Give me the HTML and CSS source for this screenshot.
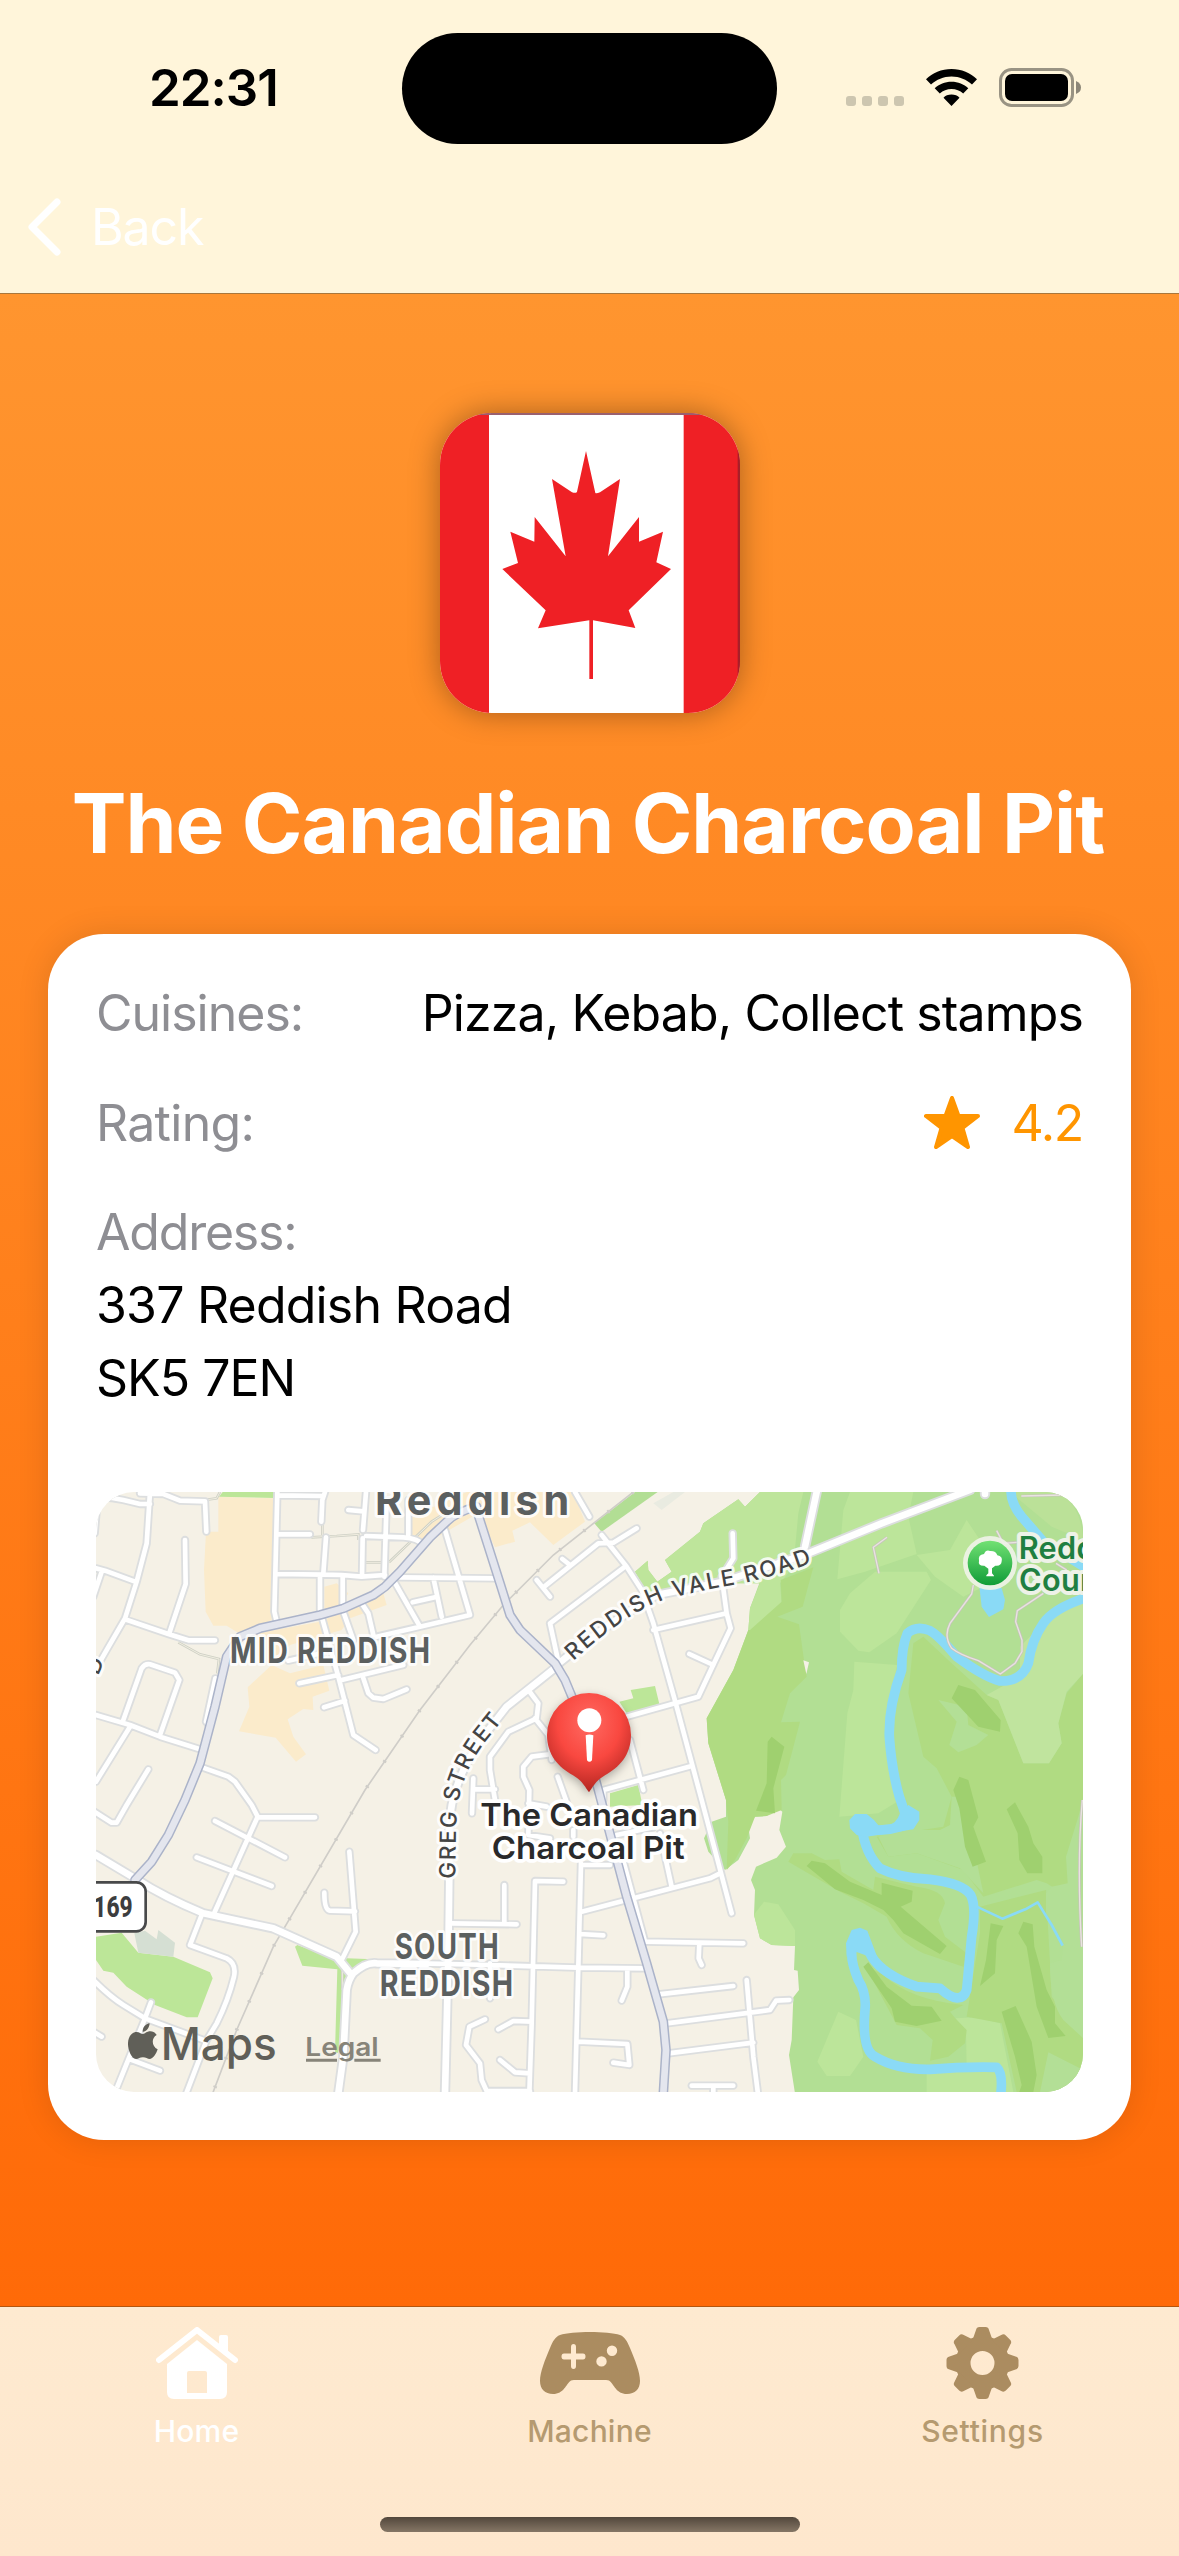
FILE: index.html
```html
<!DOCTYPE html>
<html lang="en">
<head>
<meta charset="utf-8">
<title>The Canadian Charcoal Pit</title>
<link rel="stylesheet" href="styles.css">
</head>
<body>
<div class="screen">
  <header class="top">
    <div class="status">
      <div class="status-left"><span class="clock">22:31</span></div>
      <div class="island"></div>
      <div class="status-right">
        <span class="dots"><i></i><i></i><i></i><i></i></span>
        <svg class="wifi" viewBox="0 0 51 37"><path d="M25.500 0C35.500 0 44.500 4 51 10.200L46 15.500C40.500 10.500 33.500 7.400 25.500 7.400S10.500 10.500 5 15.500L0 10.200C6.500 4 15.500 0 25.500 0ZM25.500 12.800C32 12.800 38 15.300 42.300 19.300L37.200 24.500C34 21.700 30 20 25.500 20S17 21.700 13.800 24.500L8.700 19.300C13 15.300 19 12.800 25.500 12.800ZM25.500 25.500C28.800 25.500 31.700 26.700 33.500 28.700L25.500 37L17.500 28.700C19.300 26.700 22.200 25.500 25.500 25.500Z"/></svg>
        <svg class="battery" viewBox="0 0 83 39"><rect x="1.500" y="1.500" width="72" height="36" rx="11" fill="none" stroke="#000" stroke-opacity=".4" stroke-width="3"/><rect x="6" y="6" width="63" height="27" rx="7"/><path d="M77 13Q82 15 82 19.500T77 26Z" fill-opacity=".45"/></svg>
      </div>
    </div>
    <nav class="nav">
      <svg class="chevron" viewBox="0 0 34 58"><path d="M30 4L5 29L30 54" fill="none" stroke="#fff" stroke-width="7" stroke-linecap="round" stroke-linejoin="round"/></svg>
      <span class="back">Back</span>
    </nav>
  </header>

  <main class="content">
    <svg class="flag" viewBox="0 0 900 900" preserveAspectRatio="none">
      <rect width="900" height="900" fill="#fff"/>
      <rect width="147" height="900" fill="#ef2025"/><rect x="731" width="169" height="900" fill="#ef2025"/>
      <rect x="893" width="7" height="900" fill="#a81e28"/>
      <rect width="900" height="6" fill="#99606f"/>
      <path fill="#ef2025" d="M438 114L466 240Q470 242 480 238L540 198L504 430L597 312L597 386L669 356L649 448L693 468L566 592L586 645L459 622L459 798L448 798L448 622L294 646L317 592L187 468L234 450L211 356L283 386L284 312L377 430L336 198L396 238Q408 242 411 236Z"/>
    </svg>
    <h1 class="title">The Canadian Charcoal Pit</h1>

    <section class="card">
      <div class="row"><span class="label cuisines">Cuisines:</span><span class="value kinds">Pizza, Kebab, Collect stamps</span></div>
      <div class="row"><span class="label rating">Rating:</span>
        <span class="stars"><svg class="star" viewBox="0 0 56 53"><path d="M28 2L34.500 20H54L38.500 32L44 51L28 40L12 51L17.500 32L2 20H21.500Z" fill="#ff9500" stroke="#ff9500" stroke-width="4" stroke-linejoin="round"/></svg><span class="score">4.2</span></span></div>
      <div class="address">
        <span class="label addr">Address:</span>
        <span class="value street">337 Reddish Road</span>
        <span class="value post">SK5 7EN</span>
      </div>

      <svg class="map" viewBox="18 36 2961 1800">
        <defs>
          <linearGradient id="park" x1="0" y1="0" x2="0" y2="1"><stop offset="0" stop-color="#72e173"/><stop offset="1" stop-color="#0f9c38"/></linearGradient>
          <radialGradient id="pin" cx=".5" cy=".3" r=".75"><stop offset="0" stop-color="#ff6a62"/><stop offset=".5" stop-color="#f94840"/><stop offset="1" stop-color="#a8201c"/></radialGradient>
          <path id="vale" d="M1450 543Q1590 415 1700 368Q1800 335 1960 310Q2080 282 2200 235"/>
          <path id="greg" d="M1096 1196L1098 1060C1100 1000 1103 950 1128 888Q1150 830 1190 780L1250 705"/>
          <g id="streets">
            <path d="M18 52Q60 50 100 60L150 72H180M180 36L170 190L140 305L105 415L50 510L10 580M150 40L220 42L270 62L345 64L349 155M18 265L45 272L135 305M35 275L10 350M285 180L287 312L237 462M105 418L235 462L295 481H375M14 160L20 90M562 36L556 280L553 395L560 425M562 46L700 48M705 36L697 60L694 125M562 163H660M775 90L820 94M828 36L819 150M708 172L700 280M562 282L700 284L755 285L815 290L885 285M818 175L816 290M828 168L940 172Q985 175 1000 195M890 60L883 290M955 60V165M690 290V400M758 290V380M930 292L1215 295M910 300L990 440M968 367L1035 352M860 470L990 440L1140 405L1065 150M1030 293L1055 410M815 370L835 400L850 465M698 420L745 590L790 765L857 810M760 395L790 480M595 542L700 518M628 610L745 585M755 600L940 555M820 595L835 640L850 653L880 657L950 628M702 682L765 662M376 595L348 725L356 735M100 720L155 565Q165 550 180 553L255 578L268 600L210 765M18 705L120 735L210 770L330 808M120 740L18 905M175 868L110 975L80 1028H65L10 993M330 860L415 890L435 905L485 975L503 1010L370 1305M503 1012H675"/>
            <g transform="translate(990 0)"><path d="M465 36L508 110M350 300L390 350M370 322L535 190L580 188L650 145M427 237L450 255M545 165L620 260L665 330L700 430L770 680L845 960L935 1300M415 545L390 430L615 260M700 450L920 400M938 160L940 235L905 290L920 400L932 445L875 565L835 650L620 710M808 522L880 555M325 630L355 670L350 715L265 755L210 830V870L225 960M345 715L385 765L395 840M160 895L156 1000M160 928H225M395 822L335 830L310 860V890L328 930L325 1065L390 1075M325 970L380 980M413 890L445 980M630 780L670 930M550 930L815 858M550 930V960M640 780"/></g>
            <g transform="translate(0 930)"><path d="M375 93L585 202M320 202L545 288M335 375L300 465L410 505Q440 520 432 560Q415 630 380 700L350 750L285 920M10 570Q60 620 100 645L165 685L340 750M183 637L165 685L78 900M120 808L210 842M10 725L35 740M778 185L797 425L755 510M703 308Q703 360 720 362L795 364"/></g>
            <g transform="translate(990 930)"><path d="M460 120V140M485 365L620 330L870 265L900 250M600 175L675 455L970 460M838 460L836 505L845 525M720 130L755 290M590 135L700 112M430 275L345 273L335 700L328 910M253 285V400M95 400L290 403M483 220L475 530L465 910M483 225H570M480 432L550 436M0 520L210 525L475 533L680 535M622 540V590L605 632M715 613L940 588M740 700L1050 660L1068 632L1108 630M745 790L1000 758M980 570L1000 800L1015 920M815 887H940M880 890V920M335 695L280 693L235 718M330 850L285 847L240 810M195 688L148 710L138 765L180 820L185 870L200 903H330M475 755L622 762L628 825L580 818M210 520V625"/></g>
          </g>
          <g id="wide">
            <path d="M18 1125L140 1198Q220 1250 340 1300L550 1345L740 1430L785 1485M745 1840L760 1730L770 1530Q775 1500 790 1480Q830 1445 860 1450L1010 1452M1400 555Q1550 430 1700 345L1900 305L2155 220L2375 130L2640 30M2180 36L2145 200M2685 30V42M1400 560L1250 680L1195 750Q1078 900 1078 1050V1180L1075 1430L1065 1840"/>
          </g>
          <g id="main">
            <path d="M1160 80Q1100 95 1070 125L1020 172L930 275L885 320L850 345L760 385L690 405L510 445L450 470L410 530L375 680L330 850L285 960L235 1065L185 1145L135 1200M1160 90L1230 310L1260 405L1290 450L1395 550L1425 600L1450 660L1525 930L1610 1250L1670 1450L1720 1625L1728 1710L1720 1840"/>
          </g>
        </defs>
        <rect x="18" y="36" width="2961" height="1800" fill="#f5f1e6"/>

        <g fill="#fbebcb">
          <path d="M385 50L553 55L545 420L455 465L410 437H370L347 395L342 270L348 155H385ZM500 460L690 425L880 340L890 375L780 415L755 450L600 495L545 555L500 525ZM703 320L740 310L775 340L752 380L703 400ZM545 555L600 580L700 555L718 632L668 650L670 690L640 687L593 718L610 770L648 823L618 845L557 773L447 754L478 680L473 622ZM965 110L1130 36H1450L1485 125L1390 195L1320 127L1267 152L1275 185L1215 202L1165 100L990 200L965 165Z"/>
        </g>
        <path fill="#bce698" d="M398 36H552V54L387 50Z"/>
        <path fill="#b2de94" d="M1703 36L1535 155L1513 130L1635 36Z"/>
        <path fill="#e9ebe1" d="M1690 70L1750 36H1785L1715 90Z"/>
        <path fill="#bce698" d="M1588 665L1630 655L1622 630L1695 618L1708 672L1610 700ZM1560 980V940L1645 915L1657 975ZM18 1370L95 1358L145 1418L250 1430L360 1477L368 1495L323 1612H290L195 1575L110 1520L70 1478L40 1472L18 1440ZM622 1395L745 1440L770 1435L850 1438L790 1490L765 1530L745 1720L735 1715L742 1468L637 1457L615 1400Z"/>
        <path fill="#d5dfd3" d="M133 1360L165 1352L200 1378L205 1350L255 1388L250 1430L145 1418Z"/>

        <!-- country park -->
        <path fill="#b2df94" d="M2010 36L1965 80L1945 58L1840 130L1830 155L1725 240L1745 275L1702 305L1675 270L1673 242L1635 275L1680 350L1890 310L2008 310L1980 385L1975 450L1930 570L1850 715L1855 790L1908 960V1010L1865 1025L1842 1075L1855 1115L1905 1170L1945 1140L1980 1075L1975 1040L1995 1010L2030 1008L2063 983L2077 995L2068 1050L2088 1100L2060 1133L1998 1160L1983 1200L1995 1230L1992 1305L2010 1375L2045 1395L2115 1398L2112 1470L2123 1472L2127 1530L2110 1552L2105 1680L2097 1725L2115 1840H2980V36Z"/>
        <path fill="#bee59b" d="M2010 36L1965 80L1945 58L1840 130L1830 155L1725 240L1745 275L1702 305L1675 270L1673 242L1635 275L1680 350L1890 310L2010 310L1980 385L1975 450L1990 455L2075 370L2070 310L2110 260L2125 100L2140 36Z"/>
        <g transform="translate(1980 0)">
          <path fill="#b0db82" d="M0 450L95 365L92 300L190 262L158 380L82 410L147 433L162 540L170 590L120 640L93 727L150 725L108 885L93 900L95 990L50 1008L15 1010L-10 1075L-45 1140L-70 1170L-65 1025L-72 960L-125 790L-130 715L-50 570L-5 450Z"/>
          <path fill="#f5f1e6" d="M160 541L177 547L169 582Z"/>
          <path fill="#bce59a" d="M280 90L300 36H490L475 110L500 222L345 275L262 298ZM650 120L690 180L700 320L640 350L555 290L500 225L600 210ZM300 340L375 275H530L543 300L440 460L358 517L325 512L270 455V390ZM313 545L442 555L415 700L420 870L450 960L385 1000L268 1010L292 700L310 630Z"/>
          <path fill="#b0db82" d="M520 470L600 545L710 645L745 660L820 850H897L935 790L925 730L950 640L1000 580V1280L890 1210L860 1200L700 1250L640 1170L500 1120L415 1130L380 1070L580 1040L605 950L560 865L520 830L475 640L490 490Z"/>
          <path fill="#c0e49e" d="M810 500L880 430L1000 360V580L950 635L925 730L935 790L897 850H820L745 660L710 645L810 590Z"/>
          <path fill="#bbe198" d="M780 36H900Q990 50 1000 180L905 140Z"/>
          <path fill="#b3df96" d="M565 660L650 680L655 735L715 765L680 795L625 817L598 795L620 725ZM385 1070L450 1050H570L600 1035L605 950H640L700 1240L630 1165L500 1120L415 1130Z"/>
          <path fill="#9fd06f" d="M625 615L675 630L752 720L750 755L685 740L605 655ZM65 770L103 800L70 925L75 1000L18 992L50 910L53 785ZM628 890L655 900L685 1012L670 1040L708 1145L668 1160L645 1100L628 985L610 930ZM795 967L835 1040L850 1090L877 1130V1180H832L808 1140L803 1060L770 988Z"/>
        </g>
        <g transform="translate(1980 930)">
          <path fill="#bce59a" d="M15 370L42 335L85 343L135 420V468L65 465L30 445L12 375ZM265 665L318 690L340 800L300 858H230L202 815ZM617 685L680 682L750 700L790 906H530V850L650 830L648 720Z"/>
          <path fill="#b0db82" d="M115 215L130 190H185L225 210L268 208L275 245L370 300L375 260L500 290Q580 300 585 340L565 390L585 440L650 490L640 530L520 490Q440 450 410 380L340 340L270 305ZM690 350L888 300L900 520L905 620L1000 745V906H800L755 700L650 680L690 430ZM345 525L400 555Q480 630 640 645L600 665L620 690L650 720L645 760L595 800L540 812L548 750L510 715L440 705Z"/>
          <path fill="#9fd06f" d="M170 228L185 212L225 220L300 275L395 315V278L488 302L485 335L452 350L590 468L570 492L460 430L430 390L400 360L340 330L255 298ZM340 530L355 517L410 590L485 647L545 650L575 692L500 708L435 695L425 655ZM722 400L760 408L740 450L735 550L690 588L708 510ZM820 395L848 403L853 470L890 600L915 650V700L947 738L895 744L860 650L830 470L805 430ZM755 665L797 648L845 755L860 855L850 906H808L815 885L795 800Z"/>
          <path fill="#b3df96" d="M1000 20V745L940 690Q900 640 900 520L935 510L940 455L888 380V310L905 290L953 280L948 200L985 80ZM895 787L1000 840V906H870Z"/>
        </g>

        <!-- footpaths -->
        <path d="M345 60L380 55L390 36M265 487L330 523L387 537L382 580M664 172L740 168L805 163V180M697 130V165M828 247H875M897 247L1025 125L1080 90M757 1470V1530" fill="none" stroke="#cfd1c6" stroke-width="8"/>
        <path d="M345 60L380 55L390 36M265 487L330 523L387 537L382 580M664 172L740 168L805 163V180M697 130V165M828 247H875M897 247L1025 125L1080 90M757 1470V1530" fill="none" stroke="#f0ede0" stroke-width="3"/>

        <!-- railway -->
        <path d="M1630 36L1390 225L1240 375L1140 495L990 690L825 930L550 1400L440 1650L368 1840" fill="none" stroke="#cfcdc8" stroke-width="5"/>
        <path d="M1630 36L1390 225L1240 375L1140 495L990 690L825 930L550 1400L440 1650L368 1840" fill="none" stroke="#cfcdc8" stroke-width="11" stroke-dasharray="6 86"/>

        <!-- river -->
        <g fill="none" stroke="#8adaf6" stroke-width="29" stroke-linejoin="round">
          <path d="M2763 30Q2762 70 2795 110L2860 185L2990 265M2990 352Q2890 385 2860 430Q2825 480 2815 550Q2795 605 2730 603Q2680 590 2600 530Q2545 465 2520 452Q2480 435 2452 460Q2435 500 2435 570Q2395 680 2398 770Q2405 870 2428 950L2445 1000Q2480 1015 2455 1032Q2400 1055 2320 1050"/>
          <g transform="translate(1980 930)"><path d="M335 110Q345 190 390 235Q450 265 540 268Q640 280 662 315Q680 350 665 440L650 600Q632 650 570 595L500 590Q400 555 365 500Q330 430 310 460Q295 500 325 570Q350 610 345 660Q335 780 375 800Q440 840 540 838Q640 830 740 832Q760 850 752 915"/>
          <path d="M680 350L757 386L830 356L863 337L905 405L938 467" stroke-width="8"/></g>
        </g>
        <g fill="#8adaf6"><path d="M2278 1020L2295 1002H2330L2352 1020L2370 1042L2390 1040Q2420 1030 2430 1000L2455 975L2488 995V1020L2470 1048L2330 1070L2300 1065L2280 1045Z"/><path d="M2268 1390L2285 1350L2310 1343L2332 1352L2365 1440L2290 1412L2270 1430Z"/><path d="M2667 310L2735 325L2745 360L2740 388L2697 411L2675 380Z"/></g>

        <!-- park trails -->
        <path d="M2391 172L2350 202L2367 280M2720 152L2740 190L2780 187M2650 315L2645 342L2580 430Q2560 470 2585 505Q2610 525 2665 542L2731 582L2775 550L2796 515V480L2777 425L2782 392L2860 340M2794 48L2920 45M2898 250L2930 270M2977 960Q2960 1150 2975 1400" fill="none" stroke="#c7c2bd" stroke-width="8"/>
        <path d="M2391 172L2350 202L2367 280M2720 152L2740 190L2780 187M2650 315L2645 342L2580 430Q2560 470 2585 505Q2610 525 2665 542L2731 582L2775 550L2796 515V480L2777 425L2782 392L2860 340M2794 48L2920 45M2898 250L2930 270M2977 960Q2960 1150 2975 1400" fill="none" stroke="#e9e4e0" stroke-width="4"/>

        <g class="roads">
          <use href="#streets" stroke="#dcdedf" stroke-width="25"/>
          <use href="#wide" stroke="#dcdedf" stroke-width="31"/>
          <use href="#streets" stroke="#fff" stroke-width="14"/>
          <use href="#wide" stroke="#fff" stroke-width="20"/>
          <use href="#main" stroke="#abb3c9" stroke-width="29"/>
          <use href="#main" stroke="#e4e6ee" stroke-width="20"/>
        </g>

        <g class="halo">
          <text class="town" x="855" y="105" textLength="583">Reddish</text>
          <g class="district">
            <text x="420" y="548" textLength="604" lengthAdjust="spacingAndGlyphs">MID REDDISH</text>
            <text x="914" y="1437" textLength="316" lengthAdjust="spacingAndGlyphs">SOUTH</text>
            <text x="869" y="1549" textLength="404" lengthAdjust="spacingAndGlyphs">REDDISH</text>
          </g>
          <g class="road-name">
            <text><textPath href="#vale" textLength="788">REDDISH VALE ROAD</textPath></text>
            <text><textPath href="#greg" textLength="512">GREG STREET</textPath></text>
            <text transform="translate(24 588) rotate(-66)">D</text>
          </g>
        </g>

        <circle cx="2700" cy="249" r="81" fill="#f0f3e9" fill-opacity=".9"/>
        <circle cx="2700" cy="249" r="67" fill="url(#park)"/>
        <path fill="#fff" d="M2689 286L2695 280V266L2683 257Q2663 258 2667 243Q2663 224 2682 222Q2688 208 2700 213Q2718 212 2722 226Q2739 229 2735 244Q2734 259 2716 257L2706 265V280L2712 287V289H2689Z"/>
        <g class="park-name"><text x="2786" y="237">Redd</text><text x="2787" y="333">Coun</text></g>

        <rect x="-60" y="1207" width="227" height="147" rx="28" fill="#fff" stroke="#48494a" stroke-width="8"/>
        <text class="shield" x="10" y="1311" textLength="118" lengthAdjust="spacingAndGlyphs">169</text>

        <path class="pin" fill="url(#pin)" d="M1497 639A126 126 0 0 1 1623 765C1623 825 1588 862 1545 886C1515 903 1507 925 1497 937C1487 925 1479 903 1449 886C1406 862 1371 825 1371 765A126 126 0 0 1 1497 639Z"/>
        <circle cx="1498" cy="721" r="36" fill="#fff"/>
        <path fill="#fff" d="M1487 766Q1498 761 1510 766L1506 841Q1498 850 1491 841Z"/>
        <g class="place"><text x="1171" y="1038" textLength="653" lengthAdjust="spacingAndGlyphs">The Canadian</text><text x="1205" y="1137" textLength="579" lengthAdjust="spacingAndGlyphs">Charcoal Pit</text></g>

        <g class="brand">
          <path d="M179 1630C178 1645 168 1656 158 1655C158 1641 167 1632 179 1630ZM158 1662C165 1662 170 1654 181 1654C190 1654 196 1659 200 1665C183 1675 185 1700 203 1708C199 1720 190 1736 180 1737C172 1737 168 1732 159 1732C149 1732 146 1737 138 1737C124 1737 113 1708 114 1689C115 1667 128 1656 140 1656C148 1656 153 1662 158 1662Z"/>
          <text class="maps" x="212" y="1739" textLength="348" lengthAdjust="spacingAndGlyphs">Maps</text>
        </g>
        <g class="legal"><text x="646" y="1727" textLength="220" lengthAdjust="spacingAndGlyphs">Legal</text><path d="M648 1736H741V1745H648ZM793 1736H872V1745H793Z"/></g>
      </svg>
    </section>
  </main>

  <footer class="tabs">
    <div class="tab active">
      <svg class="ic-home" viewBox="0 0 82 72"><path fill="none" stroke="#fff" stroke-width="6" stroke-linecap="round" stroke-linejoin="round" d="M3 33L41 3L79 33"/><path fill="#fff" d="M63 10Q63 8 65 8H70Q72 8 72 10V29L63 22Z"/><path fill="#fff" fill-rule="evenodd" d="M41 13L71 37V65Q71 72 64 72H18Q11 72 11 65V37ZM33 44Q31 44 31 46V66H51V46Q51 44 49 44Z"/></svg>
      <span class="t-home">Home</span>
    </div>
    <div class="tab">
      <svg class="ic-pad" viewBox="0 0 100 62"><path fill="#ab8c60" fill-rule="evenodd" d="M50 0C62 0 74 1 80 3C85 5 87 9 90 16C95 28 100 40 100 49C100 57 95 62 87 62C76 62 74 52 69 48.500Q68 48 66 48H34Q32 48 31 48.500C26 52 24 62 13 62C5 62 0 57 0 49C0 40 5 28 10 16C13 9 15 5 20 3C26 1 38 0 50 0ZM33.500 12Q31 12 31 15V21.500H24Q21.500 21.500 21.500 24.500T24 27.500H31V34Q31 37 33.500 37T36 34V27.500H43Q45.500 27.500 45.500 24.500T43 21.500H36V15Q36 12 33.500 12ZM72 13.500A5.200 5.200 0 1 0 72 23.900A5.200 5.200 0 1 0 72 13.500ZM61.500 24.200A5.200 5.200 0 1 0 61.500 34.600A5.200 5.200 0 1 0 61.500 24.200Z"/></svg>
      <span class="t-machine">Machine</span>
    </div>
    <div class="tab">
      <svg class="ic-gear" viewBox="-36.500 -36 73 72"><g fill="#ab8c60"><path fill-rule="evenodd" d="M0-27A27 27 0 1 0 0 27A27 27 0 1 0 0-27ZM0-12A12 12 0 1 1 0 12A12 12 0 1 1 0-12Z"/><g id="teeth"><path id="tooth" d="M-10-23L-6.500-33Q-6-36 -3-36H3Q6-36 6.500-33L10-23Z"/><use href="#tooth" transform="rotate(45)"/><use href="#tooth" transform="rotate(90)"/><use href="#tooth" transform="rotate(135)"/></g><use href="#teeth" transform="rotate(180)"/></g></svg>
      <span class="t-settings">Settings</span>
    </div>
    <div class="home-indicator"></div>
  </footer>
</div>
</body>
</html>
```

FILE: styles.css
```css
* { box-sizing: border-box; }
body {
  margin: 0;
  font-family: Inter, "Liberation Sans", sans-serif;
}
.screen {
  width: 1179px;
  height: 2556px;
  display: flex;
  flex-direction: column;
  overflow: hidden;
  background: linear-gradient(#ff9933 0, #ff952f 294px, #ff6a08 2306px);
}
.top {
  height: 294px;
  flex: none;
  background: #fff5da;
  border-bottom: 1px solid #a9773c;
}
.status {
  display: grid;
  grid-template-columns: 1fr 375px 1fr;
  padding-top: 33px;
  height: 177px;
}
.status-left { padding: 24px 0 0 149px; }
.clock {
  display: block;
  font-size: 51px;
  line-height: 61px;
  font-weight: 600;
  letter-spacing: -1px;
}
.island { height: 111px; border-radius: 56px; background: #000; }
.status-right { display: flex; align-items: flex-start; padding: 35px 0 0 69px; }
.dots { display: flex; gap: 6px; padding-top: 28px; width: 80px; }
.dots i { width: 10px; height: 10px; border-radius: 3px; background: #cdc6b0; }
.wifi { width: 51px; height: 37px; margin: 1px 22px 0 0; flex: none; }
.battery { width: 83px; height: 39px; flex: none; }
.nav { display: flex; align-items: center; height: 100px; padding-left: 27px; }
.chevron { width: 34px; height: 58px; margin-right: 30px; }
.back { font-size: 50px; line-height: 60px; color: #fff; letter-spacing: -1.1px; }

.content {
  flex: 1;
  display: flex;
  flex-direction: column;
  align-items: center;
  padding-top: 119px;
}
.flag {
  width: 300px;
  height: 300px;
  border-radius: 52px;
  box-shadow: 0 0 30px rgba(0, 0, 0, .34);
}
.title {
  margin: 61px 3px 61px 0;
  font-size: 82px;
  line-height: 99px;
  font-weight: 700;
  color: #fff;
  white-space: nowrap;
  letter-spacing: -1px;
}
.card {
  width: 1083px;
  height: 1206px;
  padding: 49px 48px 48px;
  display: flex;
  flex-direction: column;
  background: #fff;
  border-radius: 56px;
  box-shadow: 0 0 32px rgba(0, 0, 0, .12);
  font-size: 50px;
  line-height: 61px;
}
.row { display: flex; justify-content: space-between; height: 61px; margin-bottom: 48.500px; }
.label { color: #8e8e93; }
.value { color: #000; }
.label, .value { white-space: nowrap; letter-spacing: -1px; }
.label.rating { letter-spacing: -.7px; }
.label.addr { letter-spacing: -1.2px; }
.value.kinds { letter-spacing: -.87px; }
.value.street { letter-spacing: -.8px; }
.stars { display: flex; align-items: flex-start; color: #ff9500; }
.star { width: 56px; height: 53px; margin: 3px 31px 0 0; }
.score { letter-spacing: -1.3px; }
.address { display: flex; flex-direction: column; gap: 12px; margin-bottom: 83px; }
.map { width: 987px; height: 600px; border-radius: 38px; display: block; flex: none; }

.roads { fill: none; stroke-linecap: round; stroke-linejoin: round; }
.map text { paint-order: stroke; stroke-linejoin: round; }
.halo text { stroke: #fff; stroke-opacity: .85; stroke-width: 18px; }
.town { font-size: 124px; font-weight: 700; fill: #5b5f5f; }
.district { font-size: 108px; font-weight: 700; fill: #5b5f5f; letter-spacing: 5px; }
.road-name { font-size: 67px; font-weight: 500; fill: #444; }
.park-name { font-size: 92px; font-weight: 600; fill: #1f7f41; stroke: #eef2e8; stroke-width: 24px; letter-spacing: 1px; }
.shield { font-family: Roboto, "Liberation Sans", sans-serif; font-size: 90px; font-weight: 800; fill: #3c3d3e; }
.pin { filter: drop-shadow(0 10px 14px rgba(0, 0, 0, .3)); }
.place { font-size: 94px; font-weight: 600; fill: #2a2a2b; stroke: #fff; stroke-width: 22px; }
.brand { fill: #605f58; }
.maps { font-size: 137px; font-weight: 500; }
.legal { fill: #878479; font-size: 76px; font-weight: 600; }

.tabs {
  height: 250px;
  flex: none;
  display: grid;
  grid-template-columns: 1fr 1fr 1fr;
  grid-template-rows: 210px 16px;
  background: linear-gradient(#feead0, #fee7cd);
  border-top: 1px solid #b4560e;
}
.tab {
  display: flex;
  flex-direction: column;
  align-items: center;
  padding-top: 20px;
  font-size: 30px;
  line-height: 36px;
  font-weight: 500;
  color: #b59a70;
}
.tab svg { flex: none; }
.tab span { margin-top: 14px; letter-spacing: .2px; }
.tab .t-settings { letter-spacing: .7px; }
.active { color: #fff; }
.ic-home { width: 82px; height: 72px; }
.ic-pad { width: 100px; height: 62px; margin: 5px 0; }
.ic-gear { width: 73px; height: 72px; }
.home-indicator {
  grid-column: 1 / 4;
  justify-self: center;
  width: 420px;
  height: 15px;
  border-radius: 8px;
  background: linear-gradient(#52473c, #857665);
}
```
